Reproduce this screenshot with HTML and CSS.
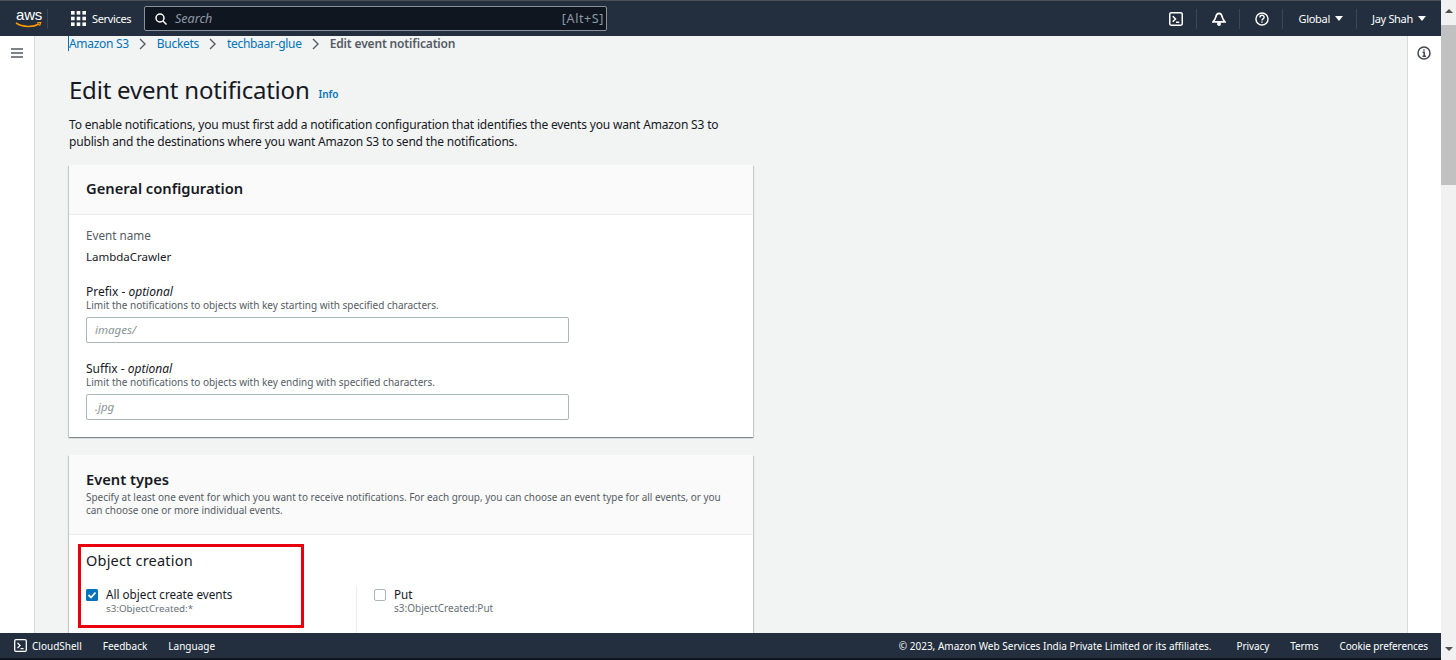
FILE: index.html
```html
<!DOCTYPE html>
<html lang="en">
<head>
<meta charset="utf-8">
<title>Edit event notification</title>
<link rel="stylesheet" href="styles.css">
</head>
<body>
<div class="window">
  <div class="frame">
    <header class="topbar">
      <div class="aws">
        <span class="aws-text">aws</span>
        <svg class="smile" width="27" height="7" viewBox="0 0 27 7"><path d="M1 1c7 4.500 17 4.500 23 1" fill="none" stroke="#ff9900" stroke-width="1.500"/><path d="M22 .8l3.800-.3-1.300 3.300" fill="none" stroke="#ff9900" stroke-width="1.200"/></svg>
      </div>
      <span class="top-sep first"></span>
      <svg class="grid-ico" width="15" height="15" viewBox="0 0 15 15" fill="#fff"><rect width="3.600" height="3.600"/><rect x="5.700" width="3.600" height="3.600"/><rect x="11.400" width="3.600" height="3.600"/><rect y="5.700" width="3.600" height="3.600"/><rect x="5.700" y="5.700" width="3.600" height="3.600"/><rect x="11.400" y="5.700" width="3.600" height="3.600"/><rect y="11.400" width="3.600" height="3.600"/><rect x="5.700" y="11.400" width="3.600" height="3.600"/><rect x="11.400" y="11.400" width="3.600" height="3.600"/></svg>
      <span class="services">Services</span>
      <div class="search">
        <svg width="12" height="12" viewBox="0 0 12 12" fill="none" stroke="#fff" stroke-width="1.500"><circle cx="5" cy="5" r="4"/><path d="M8 8l3.500 3.500"/></svg>
        <span class="search-text">Search</span>
        <span class="search-key">[Alt+S]</span>
      </div>
      <div class="top-right">
        <svg class="tico" width="14" height="14" viewBox="0 0 15 15" fill="none" stroke="#fff" stroke-width="1.600"><rect x=".8" y=".8" width="13.400" height="13.400" rx="1.500"/><path d="M4 4.500l3 3-3 3M7.500 11h3.500"/></svg>
        <span class="top-sep"></span>
        <svg class="tico" width="14" height="14" viewBox="0 0 15 15" fill="none" stroke="#fff" stroke-width="1.800"><path d="M7.500 1.500c-2 0-3 1.800-3.500 4-.4 1.800-1.200 3-2.800 5h12.600c-1.600-2-2.400-3.200-2.800-5-.5-2.200-1.500-4-3.500-4z"/><circle cx="7.500" cy="12.800" r="1.200"/></svg>
        <span class="top-sep"></span>
        <svg class="tico" width="14" height="14" viewBox="0 0 15 15" fill="none" stroke="#fff" stroke-width="1.500"><circle cx="7.500" cy="7.500" r="6.500"/><path d="M5.300 5.800c0-3 4.500-3 4.500-.2 0 1.700-2.300 1.700-2.300 3.400"/><path d="M7.500 10.200v1.400"/></svg>
        <span class="top-sep"></span>
        <span class="menu global">Global<i class="caret"></i></span>
        <span class="top-sep"></span>
        <span class="menu user">Jay Shah<i class="caret"></i></span>
      </div>
    </header>
    <div class="body">
      <aside class="rail left">
        <svg width="12" height="10" viewBox="0 0 12 10" stroke="#545b64" stroke-width="1.600"><path d="M0 1h12M0 5h12M0 9h12"/></svg>
      </aside>
      <main class="content">
        <nav class="crumbs">
          <a class="focus">Amazon S3</a><svg class="chev" width="8" height="12" viewBox="0 0 8 12" fill="none" stroke="#545b64" stroke-width="1.400"><path d="M1 1l5 5-5 5"/></svg>
          <a>Buckets</a><svg class="chev" width="8" height="12" viewBox="0 0 8 12" fill="none" stroke="#545b64" stroke-width="1.400"><path d="M1 1l5 5-5 5"/></svg>
          <a>techbaar-glue</a><svg class="chev" width="8" height="12" viewBox="0 0 8 12" fill="none" stroke="#545b64" stroke-width="1.400"><path d="M1 1l5 5-5 5"/></svg>
          <strong>Edit event notification</strong>
        </nav>
        <div class="title-row"><h1>Edit event notification</h1><a class="info">Info</a></div>
        <p class="intro">To enable notifications, you must first add a notification configuration that identifies the events you want Amazon S3 to publish and the destinations where you want Amazon S3 to send the notifications.</p>
        <section class="card">
          <div class="card-head general"><h2>General configuration</h2></div>
          <div class="card-body">
            <div class="label">Event name</div>
            <div class="value">LambdaCrawler</div>
            <div class="field first-field">
              <div class="flabel">Prefix - <em>optional</em></div>
              <div class="hint">Limit the notifications to objects with key starting with specified characters.</div>
              <div class="input">images/</div>
            </div>
            <div class="field">
              <div class="flabel">Suffix - <em>optional</em></div>
              <div class="hint">Limit the notifications to objects with key ending with specified characters.</div>
              <div class="input">.jpg</div>
            </div>
          </div>
        </section>
        <section class="card second">
          <div class="card-head events">
            <h2>Event types</h2>
            <p class="desc">Specify at least one event for which you want to receive notifications. For each group, you can choose an event type for all events, or you can choose one or more individual events.</p>
          </div>
          <div class="object">
            <div class="highlight">
              <h3>Object creation</h3>
              <div class="check-row">
                <svg class="cbox" width="12" height="12" viewBox="0 0 12 12"><rect width="12" height="12" rx="1.500" fill="#0073bb"/><path d="M2.500 6l2.500 2.500 4.500-5" fill="none" stroke="#fff" stroke-width="1.800"/></svg>
                <div><div class="ctitle">All object create events</div><div class="csub">s3:ObjectCreated:*</div></div>
              </div>
            </div>
            <div class="col-put">
              <div class="check-row">
                <span class="cbox empty"></span>
                <div><div class="ctitle">Put</div><div class="csub">s3:ObjectCreated:Put</div></div>
              </div>
            </div>
          </div>
        </section>
      </main>
      <aside class="rail right">
        <svg width="14" height="14" viewBox="0 0 14 14" fill="none" stroke="#414750" stroke-width="1.500"><circle cx="7" cy="7" r="6"/><path d="M5.500 6.200H7.200V10M5.500 10.200H9"/><path d="M6.300 3.300h1.400v1.400H6.300z" fill="#414750" stroke="none"/></svg>
      </aside>
    </div>
    <footer class="footbar">
      <svg class="fico" width="13" height="13" viewBox="0 0 15 15" fill="none" stroke="#fff" stroke-width="1.500"><rect x=".8" y=".8" width="13.400" height="13.400" rx="1.500"/><path d="M4 4.500l3 3-3 3M7.500 11h3.500"/></svg>
      <span class="cloud">CloudShell</span>
      <span class="flink">Feedback</span>
      <span class="flink">Language</span>
      <div class="foot-right">
        <span>© 2023, Amazon Web Services India Private Limited or its affiliates.</span>
        <span class="fr privacy">Privacy</span>
        <span class="fr">Terms</span>
        <span class="fr">Cookie preferences</span>
      </div>
    </footer>
  </div>
  <div class="scrollbar">
    <div class="arrow up"></div>
    <div class="thumb"></div>
    <div class="track"></div>
    <div class="arrow down"></div>
  </div>
</div>
</body>
</html>
```
FILE: styles.css
```css
* { box-sizing: border-box; }
html, body { margin: 0; height: 100%; overflow: hidden; }
body { font-family: "Noto Sans", "Open Sans", sans-serif; color: #16191f; background: #fff; }
.window { display: flex; height: 660px; width: 1456px; }
.frame { width: 1441px; display: flex; flex-direction: column; height: 660px; }

.topbar { flex: none; height: 36px; background: #232f3e; border-top: 1px solid #4b4f55; display: flex; align-items: center; padding-left: 15px; color: #fff; font-size: 11px; }
.aws { width: 30px; display: flex; flex-direction: column; }
.aws-text { font: 15px/12px "Liberation Sans", sans-serif; color: #fff; letter-spacing: -.2px; padding-left: 1px; }
.smile { margin-top: 1px; }
.top-sep { width: 1px; height: 20px; background: #3a4654; }
.top-sep.first { margin-left: 2px; }
.grid-ico { margin-left: 23px; }
.services { margin-left: 6px; width: 40px; white-space: nowrap; letter-spacing: -.35px; }
.search { margin-left: 12px; width: 463px; height: 25px; background: #10161f; border: 1px solid #8a9199; border-radius: 2px; display: flex; align-items: center; padding: 0 2px 0 10px; font-size: 12.500px; }
.search-text { margin-left: 8px; font-style: italic; color: #8d99a8; flex: 1; }
.search-key { color: #8d99a8; letter-spacing: .6px; }
.top-right { margin-left: auto; display: flex; align-items: center; padding-right: 15px; }
.tico { margin: 0 13px 0 15px; }
.menu { white-space: nowrap; display: flex; align-items: center; letter-spacing: -.3px; }
.global { padding: 0 13px 0 15px; }
.user { padding-left: 15px; }
.caret { display: inline-block; margin-left: 5px; border: 4px solid transparent; border-top: 5px solid #fff; border-bottom: 0; }

.body { flex: 1; min-height: 0; display: flex; background: #f2f3f3; overflow: hidden; }
.rail { flex: none; background: #fff; display: flex; justify-content: center; padding-top: 12px; }
.rail.left { width: 35px; border-right: 1px solid #d5dbdb; padding-right: 1px; }
.rail.right { width: 34px; border-left: 1px solid #d5dbdb; padding: 10px 1px 0 0; }
.content { flex: 1; min-width: 0; padding-left: 34px; overflow: hidden; }

.crumbs { height: 15px; display: flex; align-items: center; font-size: 12px; line-height: 15px; white-space: nowrap; margin-left: -1px; }
.crumbs a { color: #0073bb; letter-spacing: -.3px; }
.crumbs .focus { border-left: 1px solid #0073bb; }
.chev { margin: 0 10px; }
.crumbs strong { color: #545b64; font-weight: 600; letter-spacing: -.15px; }
.title-row { display: flex; align-items: flex-start; margin-top: 22px; height: 33px; }
h1 { margin: 0; font-size: 24px; font-weight: 400; line-height: 33px; letter-spacing: -.22px; }
.info { margin: 14px 0 0 9px; font-size: 10px; line-height: 14px; font-weight: 600; color: #0073bb; }
.intro { margin: 10px 0 0; width: 680px; font-size: 12px; line-height: 17px; letter-spacing: -.17px; }

.card { width: 684px; background: #fff; margin-top: 15px; box-shadow: 0 1px 1px 0 rgba(0,28,36,.3), 1px 1px 1px 0 rgba(0,28,36,.15), -1px 1px 1px 0 rgba(0,28,36,.15); }
.second { margin-top: 18px; }
.card-head { background: #fafafa; border-bottom: 1px solid #eaeded; padding: 0 17px; }
.general { height: 50px; display: flex; align-items: center; padding-bottom: 4px; }
.events { height: 80px; padding-top: 14px; }
h2 { margin: 0; font-size: 14.700px; font-weight: 600; line-height: 20px; }
.desc { margin: 2px 0 0; font-size: 9.950px; line-height: 13px; color: #545b64; }
.card-body { padding: 12px 17px 17px; height: 222px; }
.label { font-size: 11.700px; line-height: 16px; color: #545b64; }
.value { margin-top: 6px; font-size: 11.500px; line-height: 16px; }
.field { margin-top: 18px; }
.first-field { margin-top: 19px; }
.flabel { font-size: 12px; line-height: 15px; }
.hint { font-size: 10px; line-height: 13px; color: #545b64; }
.input { margin-top: 5px; width: 483px; height: 26px; border: 1px solid #aab7b8; border-radius: 2px; background: #fff; padding-left: 8px; font-size: 11.500px; line-height: 24px; font-style: italic; color: #879596; }

.object { display: flex; padding: 9px 0 0 9px; height: 120px; }
.highlight { width: 226px; height: 84px; border: 3px solid #e8000f; padding: 3px 0 0 5px; flex: none; }
h3 { margin: 0; font-size: 14.500px; font-weight: 400; line-height: 20px; letter-spacing: .2px; }
.check-row { display: flex; gap: 8px; margin-top: 17px; }
.cbox { flex: none; margin-top: 2px; }
.cbox.empty { width: 12px; height: 12px; border: 1px solid #aab7b8; border-radius: 2px; background: #fff; }
.ctitle { font-size: 11.700px; line-height: 15px; }
.csub { font-size: 9.800px; line-height: 13px; color: #687078; }
.col-put { margin-left: 52px; margin-top: 42px; border-left: 1px solid #eaeded; padding: 1px 0 0 17px; height: 60px; }
.col-put .check-row { margin-top: 0; }
.col-put .csub { font-size: 10px; }

.footbar { flex: none; height: 27px; background: #232f3e; border-bottom: 2px solid #10161f; display: flex; align-items: center; padding-left: 14px; color: #fff; font-size: 10px; }
.cloud { margin-left: 5px; }
.flink { margin-left: 21px; }
.foot-right { margin-left: auto; display: flex; padding-right: 13px; }
.fr { margin-left: 21px; letter-spacing: -.1px; }
.privacy { margin-left: 25px; }

.scrollbar { width: 15px; height: 660px; background: #f1f1f1; display: flex; flex-direction: column; }
.arrow { flex: none; display: flex; justify-content: center; }
.arrow.up { height: 25px; padding-top: 9px; }
.arrow.down { height: 22px; padding-top: 9px; }
.arrow.up::before { content: ""; height: 0; border: 4px solid transparent; border-bottom: 4px solid #505050; border-top: 0; }
.arrow.down::before { content: ""; height: 0; border: 4px solid transparent; border-top: 4px solid #505050; border-bottom: 0; }
.thumb { height: 160px; flex: none; background: #c1c1c1; }
.track { flex: 1; }
```
